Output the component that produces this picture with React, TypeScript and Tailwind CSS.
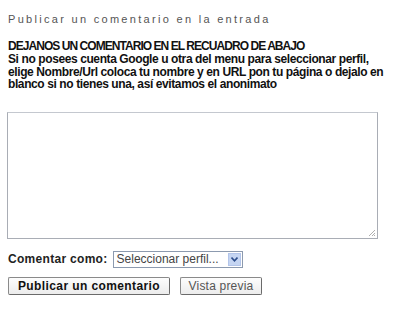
import React from "react";

export default function App() {
  return (
    <div className="w-[400px] h-[309px] bg-white overflow-hidden" style={{ fontFamily: '"Liberation Sans", Arial, sans-serif' }}>
      <div className="pl-2 pt-[13px]">
        <div className="text-[11px] leading-[13px] tracking-[2.3px] text-[#555555]">
          Publicar un comentario en la entrada
        </div>
        <div className="mt-[14px] text-[12px] leading-[12.8px] font-bold text-[#111111] tracking-[-0.4px] w-[384px]">
          <span className="tracking-[-0.95px]">DEJANOS UN COMENTARIO EN EL RECUADRO DE ABAJO</span>
          <br />
          Si no posees cuenta Google u otra del menu para seleccionar perfil,
          <br />
          elige Nombre/Url coloca tu nombre y en URL pon tu página o dejalo en
          <br />
          blanco si no tienes una, así evitamos el anonimato
        </div>
      </div>
      <div className="ml-[7px] mt-[21px] w-[371px] h-[127px] border border-[#a9adb5] border-t-[#c4c8cf] bg-white relative">
        <svg className="absolute right-[1px] bottom-[1px]" width="9" height="9" viewBox="0 0 9 9">
          <line x1="8" y1="2" x2="2" y2="8" stroke="#b0b0b0" strokeWidth="1" />
          <line x1="8" y1="5" x2="5" y2="8" stroke="#b0b0b0" strokeWidth="1" />
          <line x1="8" y1="7" x2="7" y2="8" stroke="#b0b0b0" strokeWidth="1" />
        </svg>
      </div>
      <div className="flex items-center ml-2 mt-[11px]">
        <span className="text-[12px] font-bold text-[#222222] tracking-[0.3px]">Comentar como:</span>
        <div className="ml-[5px] w-[130px] h-[17px] border border-[#8c9aaf] bg-white flex items-center">
          <span className="flex-1 pl-[3px] text-[12px] text-[#444444] leading-[15px]">Seleccionar perfil...</span>
          <div className="w-[13px] h-[13px] mr-[1px] bg-[#c5d5f2] border border-[#b3c5ea] flex items-center justify-center">
            <svg width="7" height="5" viewBox="0 0 7 5">
              <path d="M0.5 0.5 L3.5 3.8 L6.5 0.5" fill="none" stroke="#2d4e8c" strokeWidth="1.6" />
            </svg>
          </div>
        </div>
      </div>
      <div className="flex items-center ml-2 mt-[9px] gap-[10px]">
        <div className="w-[162px] h-[18px] border border-[#8a8a8a] border-b-[#6a6a6a] border-r-[#6a6a6a] rounded-[2px] bg-gradient-to-b from-[#fdfdfd] to-[#ececec] flex items-center justify-center text-[12px] font-bold text-[#111111] tracking-[0.4px]">
          Publicar un comentario
        </div>
        <div className="w-[82px] h-[18px] border border-[#8a8a8a] border-b-[#6a6a6a] border-r-[#6a6a6a] rounded-[2px] bg-gradient-to-b from-[#fdfdfd] to-[#ececec] flex items-center justify-center text-[12px] text-[#555555] tracking-[0.2px]">
          Vista previa
        </div>
      </div>
    </div>
  );
}
